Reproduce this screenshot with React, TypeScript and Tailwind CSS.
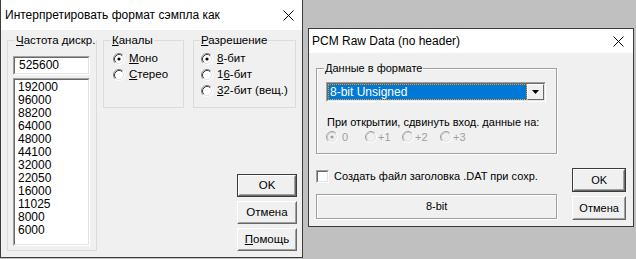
import type { ReactNode } from "react";

const Radio = ({ checked = false, disabled = false }: { checked?: boolean; disabled?: boolean }) => (
  <svg width="12" height="12" viewBox="0 0 12 12" className="shrink-0">
    <circle cx="6" cy="6" r="5" fill={disabled ? "#f0f0f0" : "#fff"} />
    <path d="M2.11 9.89 A5.5 5.5 0 0 1 9.89 2.11" fill="none" stroke={disabled ? "#a0a0a0" : "#808080"} />
    <path d="M9.89 2.11 A5.5 5.5 0 0 1 2.11 9.89" fill="none" stroke="#fff" />
    <path d="M2.82 9.18 A4.5 4.5 0 0 1 9.18 2.82" fill="none" stroke={disabled ? "#c8c8c8" : "#404040"} />
    <path d="M9.18 2.82 A4.5 4.5 0 0 1 2.82 9.18" fill="none" stroke="#e3e3e3" />
    {checked && <circle cx="6" cy="6" r="1.6" fill={disabled ? "#a0a0a0" : "#000"} />}
  </svg>
);

const CloseX = () => (
  <svg width="11" height="11" viewBox="0 0 11 11">
    <path d="M0.5 0.5 L10.5 10.5 M10.5 0.5 L0.5 10.5" stroke="#000" strokeWidth="1" />
  </svg>
);

const Button = ({ children, main = false, className = "" }: { children: ReactNode; main?: boolean; className?: string }) => (
  <div className={`${main ? "border border-[#3c3c3c]" : ""} ${className}`}>
    <div className="h-full border border-t-white border-l-white border-b-[#696969] border-r-[#696969]">
      <div className="flex h-full items-center justify-center border border-t-[#f0f0f0] border-l-[#f0f0f0] border-b-[#a0a0a0] border-r-[#a0a0a0] bg-[#f0f0f0] text-black">
        {children}
      </div>
    </div>
  </div>
);

const Group = ({ label, className, labelClass = "", children }: { label: ReactNode; className: string; labelClass?: string; children: ReactNode }) => (
  <div className={`relative border ${className}`}>
    <span className={`absolute -top-[8px] whitespace-nowrap bg-[#f0f0f0] px-[1px] leading-[14px] ${labelClass}`}>{label}</span>
    {children}
  </div>
);

const Sunken = ({ className, children }: { className: string; children: ReactNode }) => (
  <div className={`border border-t-[#a0a0a0] border-l-[#a0a0a0] border-b-white border-r-white ${className}`}>
    <div className="h-full border border-t-[#696969] border-l-[#696969] border-b-[#e3e3e3] border-r-[#e3e3e3] bg-white">
      {children}
    </div>
  </div>
);

const rates = ["192000", "96000", "88200", "64000", "48000", "44100", "32000", "22050", "16000", "11025", "8000", "6000"];

export default function App() {
  return (
    <div className="flex h-[259px] w-[636px] overflow-hidden bg-[#c0c0c0] text-[12px] text-black font-['Liberation_Sans',Arial,sans-serif]">
      {/* interpret dialog */}
      <div className="flex h-[258px] w-[303px] shrink-0 flex-col border-x border-b border-[#3c3c3c] bg-[#f0f0f0]">
        <div className="flex h-[30px] items-center justify-between bg-white pl-[4px] pr-[8px] text-[12px]">
          <span>Интерпретировать формат сэмпла как</span>
          <CloseX />
        </div>
        <div className="flex flex-1 gap-[6px] pb-[6px] pl-[6px] pr-[5px] pt-[10px] text-[11.5px]">
          <Group label={<><u>Ч</u>астота дискр.</>} className="w-[90px] border-[#dcdcdc] pl-[5px] pt-[15px]" labelClass="left-[7px]">
            <Sunken className="h-[19px] w-[77px]">
              <div className="pl-[4px] text-[12px] leading-[15px]">525600</div>
            </Sunken>
            <Sunken className="mt-[3px] h-[168px] w-[77px]">
              <div className="flex flex-col pl-[3px] pt-[1px] text-[12px] leading-[13px]">
                {rates.map((r) => (
                  <span key={r}>{r}</span>
                ))}
              </div>
            </Sunken>
          </Group>

          <div className="flex flex-1 flex-col justify-between">
            <div className="flex gap-[9px]">
              <Group label={<><u>К</u>аналы</>} className="h-[68px] w-[81px] border-[#dcdcdc] pl-[9px] pt-[10px]" labelClass="left-[7px]">
                <div className="flex h-[16px] items-center gap-[4px]">
                  <Radio checked />
                  <span><u>М</u>оно</span>
                </div>
                <div className="flex h-[16px] items-center gap-[4px]">
                  <Radio />
                  <span><u>С</u>терео</span>
                </div>
              </Group>
              <Group label={<><u>Р</u>азрешение</>} className="h-[68px] w-[103px] border-[#dcdcdc] pl-[7px] pt-[10px]" labelClass="left-[6px]">
                <div className="flex h-[16px] items-center gap-[4px]">
                  <Radio checked />
                  <span><u>8</u>-бит</span>
                </div>
                <div className="flex h-[16px] items-center gap-[4px]">
                  <Radio />
                  <span>1<u>6</u>-бит</span>
                </div>
                <div className="flex h-[16px] items-center gap-[4px]">
                  <Radio />
                  <span className="whitespace-nowrap"><u>3</u>2-бит (вещ.)</span>
                </div>
              </Group>
            </div>
            <div className="flex flex-col items-end gap-[4px]">
              <Button main className="h-[23px] w-[60px]">OK</Button>
              <Button className="h-[23px] w-[60px]">Отмена</Button>
              <Button className="h-[23px] w-[60px]"><span><u>П</u>омощь</span></Button>
            </div>
          </div>
        </div>
      </div>

      {/* pcm raw dialog */}
      <div className="flex-1 pl-[5px] pt-[28px]">
        <div className="flex h-[199px] w-[326px] flex-col border border-[#3c3c3c] bg-[#f0f0f0] text-[11px]">
          <div className="flex h-[24px] items-center justify-between bg-white pl-[3px] pr-[9px] text-[12px]">
            <span>PCM Raw Data (no header)</span>
            <CloseX />
          </div>
          <div className="flex flex-1 px-[7px] pt-[15px]">
            <div className="flex w-[242px] flex-col">
              <Group label="Данные в формате" className="h-[86px] border-[#a0a0a0] pl-[9px] pt-[13px] shadow-[inset_1px_1px_0_#fff,1px_1px_0_#fff]" labelClass="left-[7px]">
                <div className="flex h-[20px] w-[220px] border border-t-[#a0a0a0] border-l-[#a0a0a0] border-b-white border-r-white">
                  <div className="flex flex-1 border border-t-[#696969] border-l-[#696969] border-b-[#e3e3e3] border-r-[#e3e3e3] bg-white">
                    <div className="flex flex-1 items-center border border-dotted border-[#ff9b00] bg-[#0078d7] pl-[1px] text-[12px] text-white">
                      8-bit Unsigned
                    </div>
                    <div className="flex w-[17px] items-center justify-center border border-t-white border-l-white border-b-[#696969] border-r-[#696969] bg-[#f0f0f0]">
                      <svg width="7" height="4" viewBox="0 0 7 4">
                        <path d="M0 0 H7 L3.5 4 Z" fill="#000" />
                      </svg>
                    </div>
                  </div>
                </div>
                <div className="mt-[13px] whitespace-nowrap pl-[1px] leading-[14px]">При открытии, сдвинуть вход. данные на:</div>
                <div className="mt-[1px] flex h-[14px] items-center text-[#a0a0a0]">
                  <div className="flex w-[39px] items-center gap-[4px]"><Radio checked disabled /><span>0</span></div>
                  <div className="flex w-[37px] items-center gap-[1px]"><Radio disabled /><span>+1</span></div>
                  <div className="flex w-[38px] items-center gap-[1px]"><Radio disabled /><span>+2</span></div>
                  <div className="flex items-center gap-[1px]"><Radio disabled /><span>+3</span></div>
                </div>
              </Group>
              <div className="mt-[16px] flex h-[13px] items-center gap-[5px]">
                <div className="h-[13px] w-[13px] border border-t-[#a0a0a0] border-l-[#a0a0a0] border-b-white border-r-white">
                  <div className="h-full border border-t-[#696969] border-l-[#696969] border-b-[#e3e3e3] border-r-[#e3e3e3] bg-white" />
                </div>
                <span className="whitespace-nowrap">Создать файл заголовка .DAT при сохр.</span>
              </div>
              <div className="mt-[11px] flex h-[25px] items-center justify-center border border-[#a0a0a0] shadow-[inset_1px_1px_0_#fff,1px_1px_0_#fff]">
                8-bit
              </div>
            </div>
            <div className="ml-[15px] flex w-[54px] flex-col gap-[4px] pt-[100px]">
              <Button main className="h-[24px]">OK</Button>
              <Button className="h-[24px]">Отмена</Button>
            </div>
          </div>
        </div>
      </div>
    </div>
  );
}
